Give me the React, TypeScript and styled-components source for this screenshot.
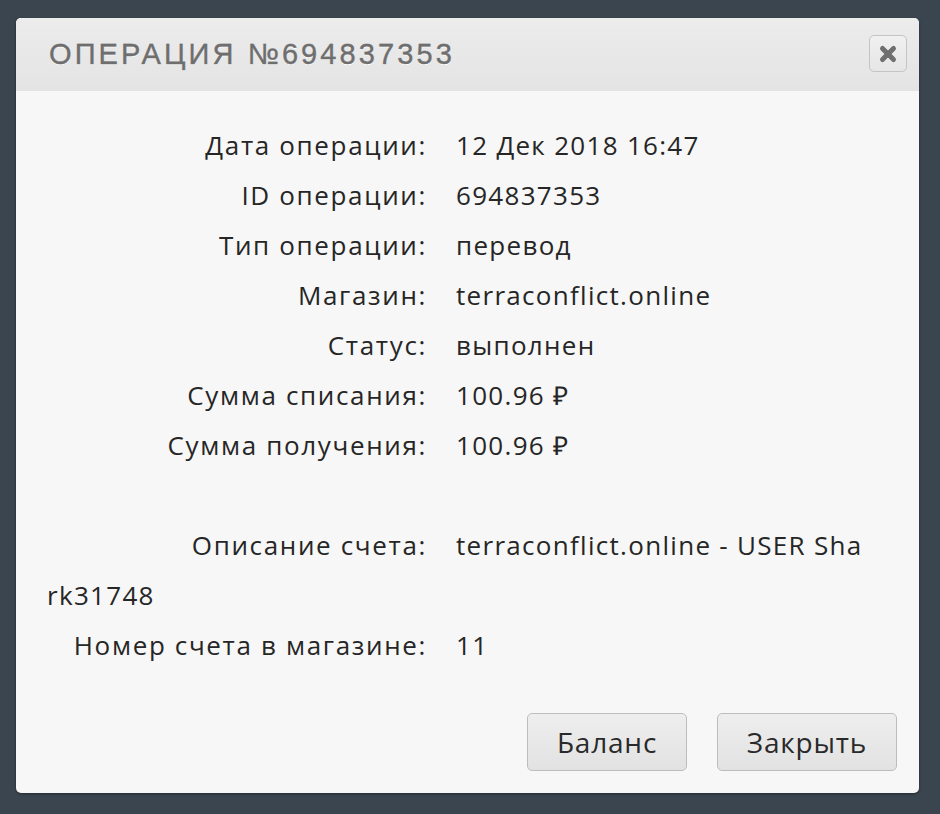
import React from "react";
import styled, { createGlobalStyle } from "styled-components";

const Global = createGlobalStyle`
  html, body {
    margin: 0;
    padding: 0;
    background: #3b4550;
  }
  body {
    width: 940px;
    height: 814px;
    overflow: hidden;
  }
  * { box-sizing: border-box; }
`;

const Page = styled.div`
  width: 940px;
  height: 814px;
  padding: 18px 21px 21px 16px;
  background: #3b4550;
`;

const Dialog = styled.div`
  width: 903px;
  height: 775px;
  background: #f7f7f7;
  border-radius: 5px;
  overflow: hidden;
  display: flex;
  flex-direction: column;
  box-shadow: 0 1px 3px rgba(0, 0, 0, 0.4);
`;

const Header = styled.div`
  height: 73px;
  background: linear-gradient(#ececec, #e4e4e4);
  display: flex;
  align-items: center;
  justify-content: space-between;
  padding: 0 12px 0 33px;
`;

const Title = styled.h1`
  margin: 0;
  font-family: "Liberation Sans", Arial, sans-serif;
  font-weight: 400;
  font-size: 29px;
  letter-spacing: 3.1px;
  color: #6e6e6e;
  -webkit-text-stroke: 0.4px #6e6e6e;
  text-shadow: 0 1px 0 #ffffff, 0 -1px 0 rgba(0, 0, 0, 0.08);
  line-height: 1;
`;

const CloseButton = styled.button`
  width: 38px;
  height: 37px;
  margin-top: -2px;
  border: 1px solid #c4c4c4;
  border-radius: 5px;
  background: linear-gradient(#f0f0f0, #e6e6e6);
  display: flex;
  align-items: center;
  justify-content: center;
  padding: 0;
  cursor: pointer;
`;

const Body = styled.div`
  flex: 1;
  padding: 29px 50px 0 31px;
  font-family: "Open Sans", sans-serif;
  font-size: 26px;
  color: #262626;
`;

const Row = styled.div`
  line-height: 50px;
  min-height: 50px;
`;

const Label = styled.span`
  display: inline-block;
  width: 380px;
  text-align: right;
  margin-right: 29px;
  vertical-align: top;
  letter-spacing: 1.65px;
`;

const Value = styled.span`
  word-break: break-all;
  letter-spacing: 1.3px;
`;

const Footer = styled.div`
  display: flex;
  justify-content: flex-end;
  gap: 30px;
  padding: 0 22px 22px 0;
`;

const Button = styled.button<{ $w: number }>`
  width: ${(p) => p.$w}px;
  height: 58px;
  border: 1px solid #bdbdbd;
  border-radius: 5px;
  background: linear-gradient(#eeeeee, #e2e2e2);
  font-family: "Open Sans", sans-serif;
  font-size: 28px;
  letter-spacing: 0.8px;
  color: #2a2a2a;
  padding: 0;
  cursor: pointer;
`;

const rows: Array<[string, string] | null> = [
  ["Дата операции:", "12 Дек 2018 16:47"],
  ["ID операции:", "694837353"],
  ["Тип операции:", "перевод"],
  ["Магазин:", "terraconflict.online"],
  ["Статус:", "выполнен"],
  ["Сумма списания:", "100.96 ₽"],
  ["Сумма получения:", "100.96 ₽"],
  null,
  ["Описание счета:", "terraconflict.online - USER Shark31748"],
  ["Номер счета в магазине:", "11"],
];

export default function App() {
  return (
    <>
      <Global />
      <Page>
        <Dialog>
          <Header>
            <Title>ОПЕРАЦИЯ №694837353</Title>
            <CloseButton aria-label="close">
              <svg width="20" height="20" viewBox="0 0 20 20">
                <g stroke="#6f6f6f" strokeWidth="5" strokeLinecap="round">
                  <line x1="4.5" y1="4.5" x2="15.5" y2="15.5" />
                  <line x1="15.5" y1="4.5" x2="4.5" y2="15.5" />
                </g>
              </svg>
            </CloseButton>
          </Header>
          <Body>
            {rows.map((r, i) =>
              r ? (
                <Row key={i}>
                  <Label>{r[0]}</Label>
                  <Value>{r[1]}</Value>
                </Row>
              ) : (
                <Row key={i} />
              )
            )}
          </Body>
          <Footer>
            <Button $w={160}>Баланс</Button>
            <Button $w={180}>Закрыть</Button>
          </Footer>
        </Dialog>
      </Page>
    </>
  );
}
